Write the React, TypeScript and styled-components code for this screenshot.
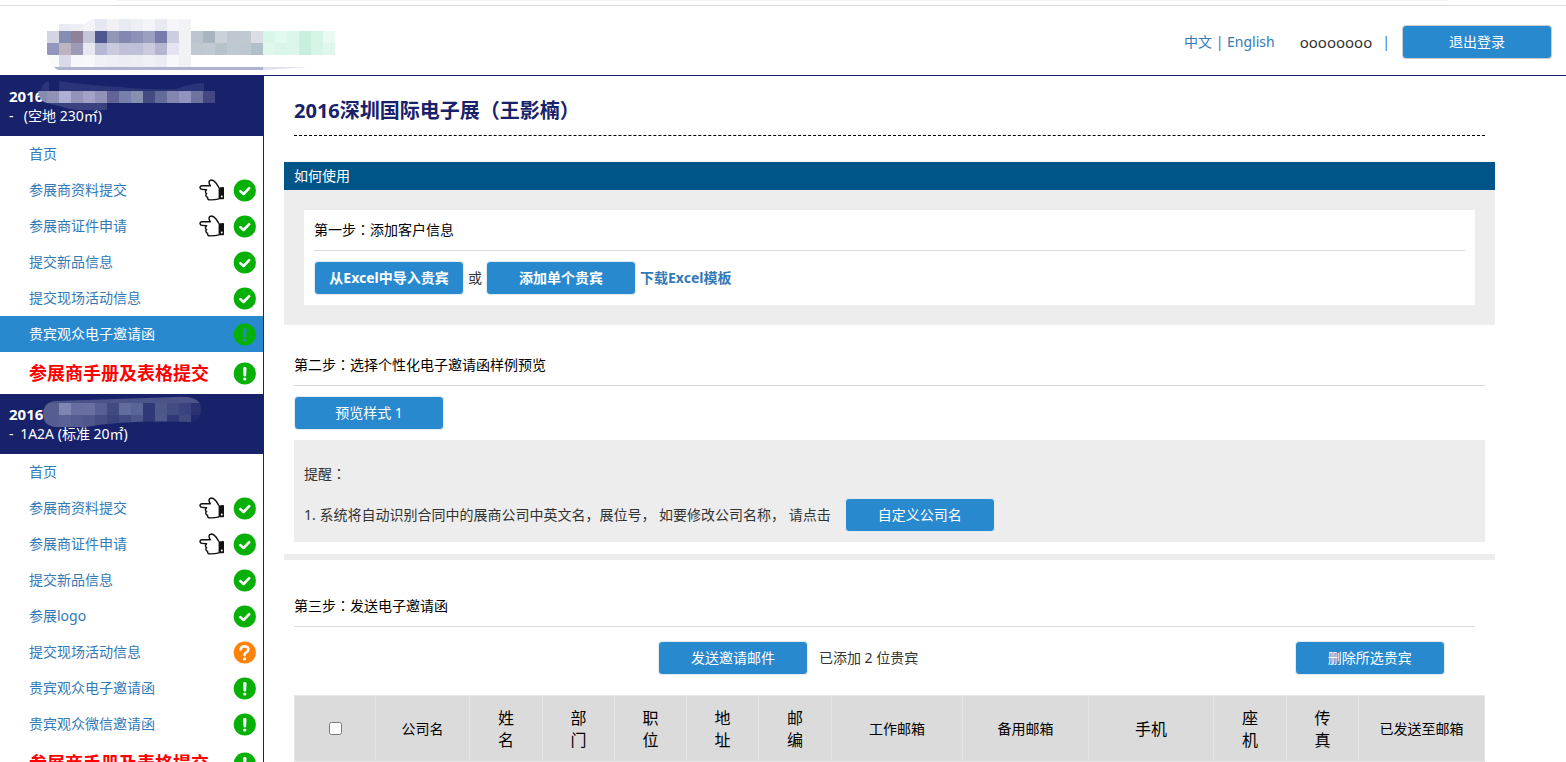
import React from 'react';
import styled, { createGlobalStyle, css } from 'styled-components';

const navy = '#18226b';
const blue = '#2989cf';
const link = '#337ab7';

const GlobalStyle = createGlobalStyle`
  *, *::before, *::after { box-sizing: border-box; }
  body {
    margin: 0;
    background: #fff;
    color: #333;
    font-family: 'Noto Sans', 'Noto Sans CJK SC', sans-serif;
    font-size: 14px;
    line-height: 20px;
    overflow-x: hidden;
  }
  a { color: ${link}; text-decoration: none; }
  h1, h2, h3, p, ul { margin: 0; padding: 0; font-weight: 400; font-size: 14px; }
  ul { list-style: none; }
`;

const TopEdge = styled.div`
  height: 6px;
  border-bottom: 1px solid #dcdcdc;
  &::before {
    content: '';
    display: block;
    height: 1px;
    margin: 0 118px 0 117px;
    background: #f1f3f4;
  }
`;

const Header = styled.header`
  display: flex;
  justify-content: space-between;
  height: 70px;
  padding: 8px 14px 0 46px;
  border-bottom: 1px solid ${navy};
`;

const Account = styled.div`
  display: flex;
  align-items: center;
  height: 56px;
`;

const Languages = styled.nav`
  margin-right: 25px;
  color: ${link};
`;

const UserName = styled.span`
  font-size: 15px;
`;

const Divider = styled.span`
  margin: 0 12px 0 10px;
  color: ${link};
`;

const Button = styled.button<{ $bold?: boolean; $edge?: string }>`
  flex: none;
  width: 150px;
  height: 34px;
  padding: 0;
  border: 1px solid ${p => p.$edge ?? '#e4ecf2'};
  border-radius: 4px;
  background: ${blue};
  color: #fff;
  font: inherit;
  font-weight: ${p => (p.$bold ? 700 : 400)};
`;

const Body = styled.div`
  display: flex;
  align-items: stretch;
`;

const Sidebar = styled.aside`
  flex: none;
  width: 264px;
  border-right: 1px solid ${navy};
`;

const BoothHead = styled.div`
  position: relative;
  height: 60px;
  padding: 10px 9px;
  background: ${navy};
  color: #fff;
`;

const BoothYear = styled.strong`
  display: block;
  font-size: 15px;
`;

const Dash = styled.span`
  margin-right: 3px;
`;

const HeadMosaic = styled.svg`
  position: absolute;
  left: 36px;
  top: 2px;
`;

const Item = styled.li<{ $active?: boolean; $strong?: boolean }>`
  display: flex;
  align-items: center;
  gap: 8px;
  height: ${p => (p.$strong ? 42 : 36)}px;
  padding: 0 7px 0 29px;
  background: ${p => (p.$active ? blue : 'transparent')};
  a {
    flex: 1;
    ${p => p.$active && css`color: #fff;`}
    ${p => p.$strong && css`color: #f00; font-size: 18px; font-weight: 700;`}
  }
  svg { flex: none; }
`;

const Main = styled.main`
  flex: 1;
  min-width: 0;
  padding: 20px 0 40px;
`;

const Column = styled.div`
  width: 93%;
  margin-left: 20px;
`;

const Title = styled.h1`
  margin: 0 10px 26px;
  padding-bottom: 9px;
  border-bottom: 1px dashed #000;
  color: ${navy};
  font-size: 20px;
  font-weight: 700;
  line-height: 30px;
`;

const BarTitle = styled.h2`
  padding: 4px 10px;
  background: #005588;
  color: #fff;
`;

const Band = styled.div`
  padding: 20px;
  background: #ededed;
`;

const Card = styled.section`
  padding: 10px;
  background: #fff;
`;

const Step = styled.section<{ $top: number }>`
  padding: ${p => p.$top}px 10px 0;
`;

const StepTitle = styled.h3<{ $short?: boolean }>`
  margin-right: ${p => (p.$short ? 10 : 0)}px;
  padding-bottom: 10px;
  border-bottom: 1px solid #dadada;
  color: #000;
`;

const Actions = styled.div`
  display: flex;
  align-items: center;
  gap: 4px;
  padding-top: 10px;
`;

const TemplateLink = styled.a`
  font-weight: 700;
`;

const Reminder = styled.div`
  display: flex;
  flex-direction: column;
  gap: 14px;
  margin-top: 10px;
  padding: 24px 10px 10px;
  background: #ededed;
`;

const ReminderLine = styled.div`
  display: flex;
  align-items: center;
  gap: 14px;
`;

const Rule = styled.div`
  height: 6px;
  margin-top: 12px;
  background: #ededed;
`;

const SendRow = styled.div`
  display: grid;
  grid-template-columns: 364fr 787fr;
  padding: 14px 40px 20px 0;
`;

const SendTools = styled.div`
  grid-column: 2;
  display: flex;
  align-items: center;
  justify-content: space-between;
`;

const SendGroup = styled.div`
  display: flex;
  align-items: center;
  gap: 11px;
`;

const Guests = styled.table`
  width: 100%;
  table-layout: fixed;
  border-collapse: collapse;
  color: #000;
`;

const HeadCell = styled.th<{ $large?: boolean }>`
  height: 66px;
  padding: 0 ${p => (p.$large ? 22 : 20)}px;
  border: 1px solid #e6e6e6;
  background: #dbdbdb;
  font-size: ${p => (p.$large ? 16 : 14)}px;
  font-weight: 400;
  line-height: 22px;
  white-space: ${p => (p.$large ? 'normal' : 'nowrap')};
`;

const Check = styled.input`
  display: block;
  width: 13px;
  height: 13px;
  margin: 0 auto;
`;

const Punct = styled.span`
  font-family: 'Noto Sans CJK TC', sans-serif;
  line-height: 1;
`;

/* Pixel mosaic: each string is a colour, null leaves the cell empty. */
const Cells = ({ rows, size = 12 }: { rows: (string | null)[][]; size?: number }) => (
  <>
    {rows.map((row, y) =>
      row.map((c, x) => c && <rect key={`${x}-${y}`} x={x * size} y={y * size} width={size} height={size} fill={c} />),
    )}
  </>
);

const logoRows = [
  [null, '#e9eaf2', '#eeeff5', '#f3f3f8', '#e6e8f1', '#f1f1f5', '#e8eaf2', '#eeeff4', '#f3f4f8', '#e9eaf1', '#f6f6fa', '#f2f3f5'],
  ['#d3d5e3', '#878db2', '#8f8199', '#c5c5d8', '#4e588f', '#9297b8', '#8388b0', '#8d91b5', '#9b9fc0', '#777ba9', '#cccde0', '#f1f2f4', '#bcc5cf', '#a8b4bf', '#cbd1d9', '#c0c7d0', '#c0c8d1', '#dcdee5', '#daf6e8', '#e2f9ed', '#dcf7e9', '#c9f0dd', '#d5f5e5', '#e9faf1'],
  ['#9297bb', '#bcb4c1', '#9c9ab5', '#e6e7f0', '#b6b9d3', '#c9cadd', '#bec0d7', '#bdc0d6', '#c9cadd', '#b4b6d0', '#e4e5f0', '#f1f2f4', '#bfc8d1', '#c1cad3', '#b8c2cb', '#c0c9d1', '#bec7d1', '#b2bec8', '#e0f8eb', '#d8f5e6', '#dcf7e9', '#c6f0dc', '#d6f5e6', '#dff8eb'],
  ['#fafafc', '#d8dbe7', '#f6f7fa', '#f7f8fb', '#f0f1f6', '#eeeff5', '#ecedf4', '#edeef4', '#eff0f5', '#ecedf4', '#f8f8fb', '#f1f2f4'],
];

const Logo = () => (
  <svg width="290" height="58" viewBox="0 0 290 58" role="img" aria-label="logo">
    <defs>
      <clipPath id="logo-clip">
        <path d="M1 17H13V10H39Q44 5 50 5H290V53H7Q3 50 1 39Z" />
      </clipPath>
    </defs>
    <g clipPath="url(#logo-clip)">
      <g transform="translate(1 5)"><Cells rows={logoRows} /></g>
    </g>
    <path d="M8 53H217V56H13Q10 56 8 53Z" fill="#adb2ce" />
    <path d="M217 53H262L217 56Z" fill="#dfe2ed" />
  </svg>
);

const MosaicOne = () => (
  <HeadMosaic width="182" height="32" viewBox="0 0 182 32" aria-hidden="true">
    <path d="M23 3Q50 7 84 9Q110 12 140 11Q155 5 168 5V15H4Q6 4 13 3V13H23Z" fill="#2b3478" />
    <path d="M10 25H71V32Q40 34 23 28Z" fill="#39417f" />
    <path d="M11 13H2Q4 24 11 25Z" fill="#848bb0" />
    <g transform="translate(11 13)">
      <Cells rows={[['#9092b6', '#adafd4', '#9393b8', '#a3a1c6', '#9192b8', '#626497', '#7680aa', '#8890b0', '#444a82', '#636b9a', '#8286b0', '#9194bd', '#6e739f', '#434882']]} />
    </g>
  </HeadMosaic>
);

const MosaicTwo = () => (
  <HeadMosaic width="182" height="32" viewBox="0 0 182 32" aria-hidden="true">
    <defs>
      <clipPath id="head-clip">
        <path d="M18 5Q80 3 140 1Q158 0 163 6Q165 9 165 15Q164 26 155 26Q90 24 50 31H18Q7 29 7 18Q7 7 18 5Z" />
      </clipPath>
    </defs>
    <g clipPath="url(#head-clip)">
      <g transform="translate(-1 -5)">
        <Cells
          rows={[
            Array(14).fill('#4b5388'),
            ['#565e90', '#565e90', '#7f86b4', '#686fa0', '#696fa1', '#585f94', '#434a82', '#636d9d', '#5a6496', '#303877', '#4e5789', '#434b82', '#3a4380', '#2b3372'],
            ['#565e90', '#555c8f', '#5a6295', '#535b90', '#50578c', '#454d84', '#3b437d', '#434b82', '#4d5689', '#303877', '#50588b', '#30387a', '#414981', '#1e286f'],
          ]}
        />
      </g>
    </g>
  </HeadMosaic>
);

type Status = 'ok' | 'info' | 'infoActive' | 'ask';

const StatusIcon = ({ status }: { status: Status }) => (
  <svg width="23" height="23" viewBox="0 0 23 23" aria-hidden="true">
    <circle cx="11.8" cy="11.5" r="11.1" fill={status === 'ask' ? '#ff8208' : '#06b006'} />
    {status === 'ok' && (
      <path d="M7.4 12.2L10.6 15L16.2 9.2" fill="none" stroke="#fff" strokeWidth="2.6" strokeLinecap="round" strokeLinejoin="round" />
    )}
    {(status === 'info' || status === 'infoActive') && (
      <g fill={status === 'info' ? '#fff' : blue}>
        <path d="M10.1 6.4Q10.1 5 11.8 5Q13.5 5 13.5 6.4L13.1 13.2Q12.9 14.4 11.8 14.4Q10.7 14.4 10.5 13.2Z" />
        <circle cx="11.8" cy="17" r="1.6" />
      </g>
    )}
    {status === 'ask' && (
      <g>
        <path d="M7.6 8.6Q7.8 5.4 11.5 5.2Q15.4 5.4 15.4 8.4Q15.4 10.2 13.2 11.3Q11.5 12.2 11.5 14" fill="none" stroke="#fff" strokeWidth="2.5" strokeLinecap="round" />
        <circle cx="11.5" cy="17.8" r="1.6" fill="#fff" />
      </g>
    )}
  </svg>
);

const Hand = () => (
  <svg width="26" height="22" viewBox="0 0 26 22" aria-hidden="true">
    <path
      d="M20 8.6L17 4Q14.6 1 12.4 1Q10 1.4 10 3.4Q10.2 5.2 11.4 6.8H3.2Q1 7 1 8.7Q1.2 10.3 3 10.4L7.6 10.8Q5.8 12 6.6 13.6Q7 14.3 7.6 14.5Q6.2 16 7.2 17.2Q7.6 18 8.6 18.2Q8.2 20.8 11 20.9Q16 21 20 19.8"
      fill="#fff" stroke="#111" strokeWidth="1.4" strokeLinejoin="round"
    />
    <path d="M19.6 8.4L24.2 8Q25 8 25 9V19.4Q25 20.2 24.2 20.2H19.6Z" fill="#111" />
    <circle cx="22.8" cy="17.6" r="1" fill="#fff" />
  </svg>
);

interface Entry { label: string; status?: Status; hand?: boolean; active?: boolean; strong?: boolean }

const boothOne: Entry[] = [
  { label: '首页' },
  { label: '参展商资料提交', status: 'ok', hand: true },
  { label: '参展商证件申请', status: 'ok', hand: true },
  { label: '提交新品信息', status: 'ok' },
  { label: '提交现场活动信息', status: 'ok' },
  { label: '贵宾观众电子邀请函', status: 'infoActive', active: true },
  { label: '参展商手册及表格提交', status: 'info', strong: true },
];

const boothTwo: Entry[] = [
  { label: '首页' },
  { label: '参展商资料提交', status: 'ok', hand: true },
  { label: '参展商证件申请', status: 'ok', hand: true },
  { label: '提交新品信息', status: 'ok' },
  { label: '参展logo', status: 'ok' },
  { label: '提交现场活动信息', status: 'ask' },
  { label: '贵宾观众电子邀请函', status: 'info' },
  { label: '贵宾观众微信邀请函', status: 'info' },
  { label: '参展商手册及表格提交', status: 'info', strong: true },
];

const Menu = ({ entries }: { entries: Entry[] }) => (
  <ul>
    {entries.map(e => (
      <Item key={e.label} $active={e.active} $strong={e.strong}>
        <a href="#">{e.label}</a>
        {e.hand && <Hand />}
        {e.status && <StatusIcon status={e.status} />}
      </Item>
    ))}
  </ul>
);

const columns: { label: string; width: number; large?: boolean }[] = [
  { label: '公司名', width: 94 },
  { label: '姓名', width: 73, large: true },
  { label: '部门', width: 72, large: true },
  { label: '职位', width: 72, large: true },
  { label: '地址', width: 72, large: true },
  { label: '邮编', width: 73, large: true },
  { label: '工作邮箱', width: 131 },
  { label: '备用邮箱', width: 126 },
  { label: '手机', width: 125, large: true },
  { label: '座机', width: 73, large: true },
  { label: '传真', width: 72, large: true },
  { label: '已发送至邮箱', width: 126 },
];

export default function App() {
  return (
    <>
      <GlobalStyle />
      <TopEdge />
      <Header>
        <Logo />
        <Account>
          <Languages><a href="#">中文</a> | <a href="#">English</a></Languages>
          <UserName>oooooooo</UserName>
          <Divider>|</Divider>
          <Button type="button" $edge="#ccc">退出登录</Button>
        </Account>
      </Header>
      <Body>
        <Sidebar>
          <BoothHead>
            <BoothYear>2016</BoothYear>
            <Dash>-&nbsp;</Dash> (空地 230㎡)
            <MosaicOne />
          </BoothHead>
          <Menu entries={boothOne} />
          <BoothHead>
            <BoothYear>2016</BoothYear>
            <Dash>-</Dash> 1A2A (标准 20㎡)
            <MosaicTwo />
          </BoothHead>
          <Menu entries={boothTwo} />
        </Sidebar>
        <Main>
          <Column>
            <Title>2016深圳国际电子展<Punct>（</Punct>王影楠<Punct>）</Punct></Title>
            <BarTitle>如何使用</BarTitle>
            <Band>
              <Card>
                <StepTitle>第一步<Punct>：</Punct>添加客户信息</StepTitle>
                <Actions>
                  <Button type="button" $bold>从Excel中导入贵宾</Button>
                  <span>或</span>
                  <Button type="button" $bold>添加单个贵宾</Button>
                  <TemplateLink href="#">下载Excel模板</TemplateLink>
                </Actions>
              </Card>
            </Band>
            <Step $top={30}>
              <StepTitle>第二步<Punct>：</Punct>选择个性化电子邀请函样例预览</StepTitle>
              <Actions>
                <Button type="button">预览样式 1</Button>
              </Actions>
              <Reminder>
                <p>提醒<Punct>：</Punct></p>
                <ReminderLine>
                  <p>1. 系统将自动识别合同中的展商公司中英文名，展位号， 如要修改公司名称， 请点击</p>
                  <Button type="button">自定义公司名</Button>
                </ReminderLine>
              </Reminder>
            </Step>
            <Rule />
            <Step $top={36}>
              <StepTitle $short>第三步<Punct>：</Punct>发送电子邀请函</StepTitle>
              <SendRow>
                <SendTools>
                  <SendGroup>
                    <Button type="button">发送邀请邮件</Button>
                    <span>已添加 2 位贵宾</span>
                  </SendGroup>
                  <Button type="button">删除所选贵宾</Button>
                </SendTools>
              </SendRow>
              <Guests>
                <colgroup>
                  <col width={81} />
                  {columns.map(c => <col key={c.label} width={c.width} />)}
                </colgroup>
                <thead>
                  <tr>
                    <HeadCell scope="col"><Check type="checkbox" aria-label="全选" /></HeadCell>
                    {columns.map(c => (
                      <HeadCell key={c.label} scope="col" $large={c.large}>{c.label}</HeadCell>
                    ))}
                  </tr>
                </thead>
              </Guests>
            </Step>
          </Column>
        </Main>
      </Body>
    </>
  );
}
